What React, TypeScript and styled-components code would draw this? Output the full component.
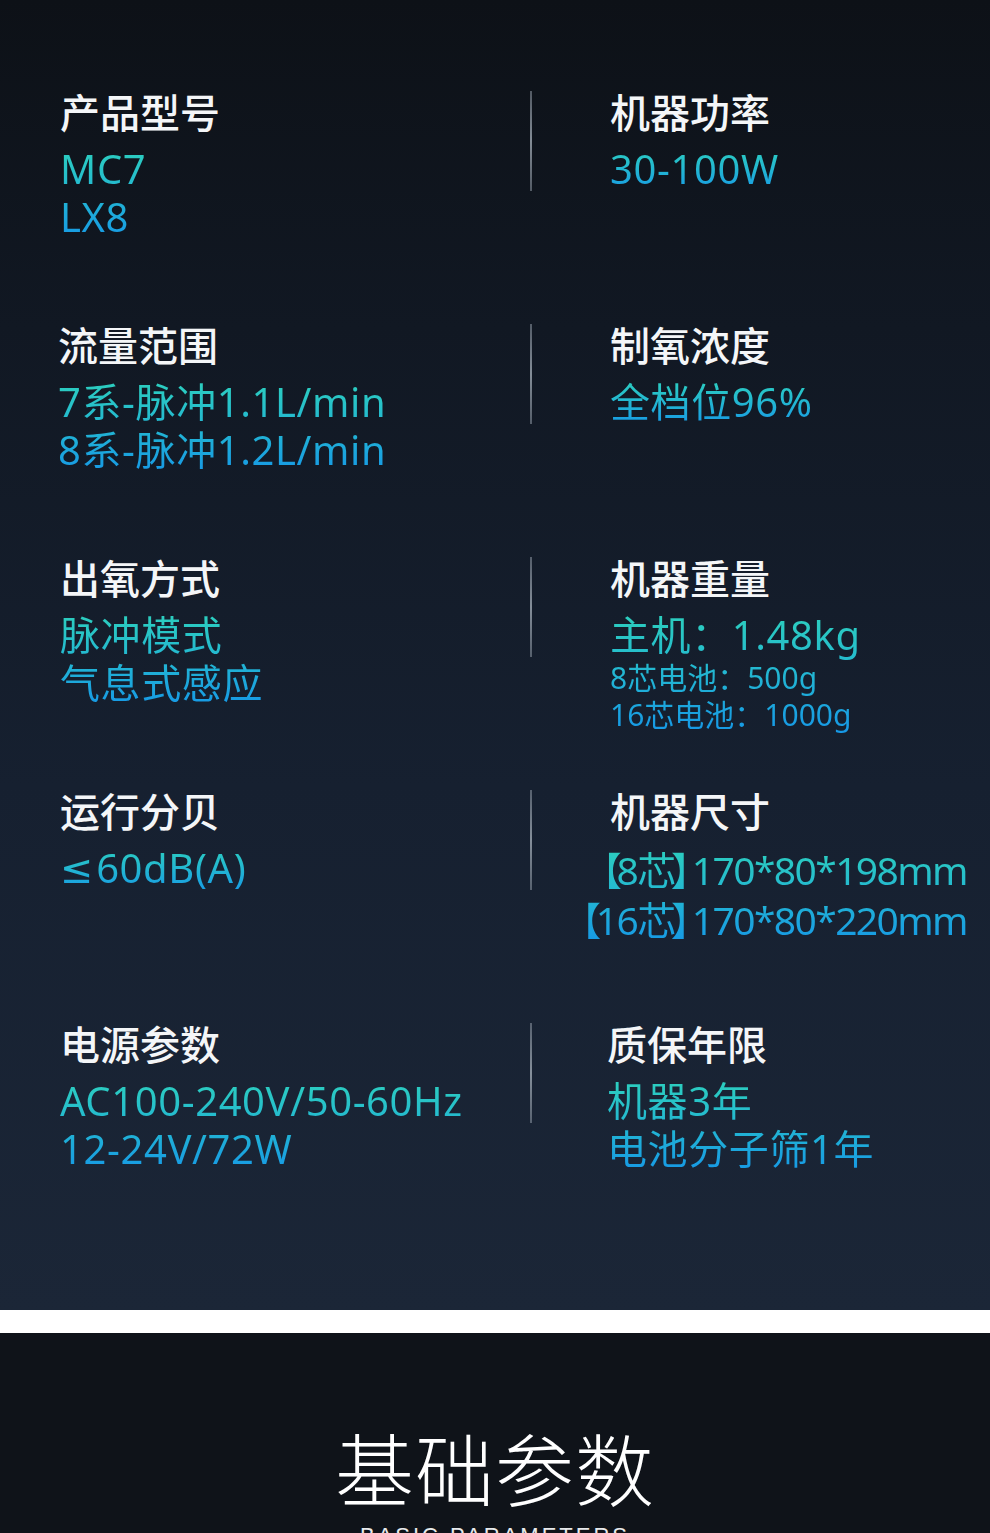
import type { ReactNode } from "react";
import styled, { createGlobalStyle } from "styled-components";

const GlobalStyle = createGlobalStyle`
  html, body {
    margin: 0;
    padding: 0;
    background: #0f1319;
    overflow: hidden;
  }
  body {
    font-family: "Noto Sans CJK SC", "Noto Sans", sans-serif;
  }
`;

type Spec = {
  label: string;
  values: ReactNode[];
  small?: string[];
  align?: "left" | "right";
  shift?: number;
};

const Size = ({ core, dims }: { core: string; dims: string }) => (
  <>
    <Bracket $side="open">【</Bracket>
    {core}
    <Bracket $side="close">】</Bracket>
    {dims}
  </>
);

const Decibel = () => (
  <>
    <Sym>≤</Sym>60dB(A)
  </>
);

const rows: [Spec, Spec][] = [
  [
    { label: "产品型号", values: ["MC7", "LX8"] },
    { label: "机器功率", values: ["30-100W"] },
  ],
  [
    { label: "流量范围", values: ["7系-脉冲1.1L/min", "8系-脉冲1.2L/min"], shift: -2 },
    { label: "制氧浓度", values: ["全档位96%"] },
  ],
  [
    { label: "出氧方式", values: ["脉冲模式", "气息式感应"] },
    { label: "机器重量", values: ["主机：1.48kg"], small: ["8芯电池：500g", "16芯电池：1000g"] },
  ],
  [
    { label: "运行分贝", values: [<Decibel key="db" />] },
    {
      label: "机器尺寸",
      values: [
        <Size key="8" core="8芯" dims="170*80*198mm" />,
        <Size key="16" core="16芯" dims="170*80*220mm" />,
      ],
      align: "right",
    },
  ],
  [
    { label: "电源参数", values: ["AC100-240V/50-60Hz", "12-24V/72W"] },
    { label: "质保年限", values: ["机器3年", "电池分子筛1年"], shift: -3 },
  ],
];

const Cell = ({ spec }: { spec: Spec }) => (
  <CellBox $shift={spec.shift ?? 0}>
    <Label>{spec.label}</Label>
    <Values $align={spec.align ?? "left"}>
      {spec.values.map((v, i) => (
        <Value key={i} $tight={spec.align === "right"}>
          {v}
        </Value>
      ))}
      {spec.small?.map((v) => (
        <SmallValue key={v}>{v}</SmallValue>
      ))}
    </Values>
  </CellBox>
);

const App = () => {
  return (
    <Page>
      <GlobalStyle />
      <SpecSection>
        {rows.map(([left, right]) => (
          <Row key={left.label}>
            <Cell spec={left} />
            <Divider />
            <RightSlot>
              <Cell spec={right} />
            </RightSlot>
          </Row>
        ))}
      </SpecSection>
      <WhiteBand />
      <TitleSection>
        <Title>基础参数</Title>
        <SubTitle>BASIC PARAMETERS</SubTitle>
      </TitleSection>
    </Page>
  );
};

const Page = styled.div`
  width: 990px;
  height: 1533px;
  overflow: hidden;
`;

const SpecSection = styled.section`
  height: 1310px;
  box-sizing: border-box;
  padding: 87px 0 0 60px;
  background: linear-gradient(180deg, #0d1117 0%, #111823 25%, #162030 60%, #1b2637 100%);
  display: flex;
  flex-direction: column;
`;

const Row = styled.div`
  display: grid;
  grid-template-columns: 470px 1px minmax(0, 1fr);
  align-items: start;
  height: 233px;
`;

const Divider = styled.div`
  width: 1.5px;
  height: 100px;
  margin-top: 4px;
  background: linear-gradient(180deg, rgba(150, 160, 172, 0.5), rgba(170, 180, 190, 0.75), rgba(150, 160, 172, 0.5));
`;

const RightSlot = styled.div`
  min-width: 0;
  padding-left: 79px;
  padding-right: 23px;
`;

const CellBox = styled.div<{ $shift: number }>`
  display: flex;
  flex-direction: column;
  margin-left: ${(p) => p.$shift}px;
`;

const Label = styled.div`
  color: #f4f6f8;
  font-size: 40px;
  font-weight: 500;
  line-height: 48px;
  margin-bottom: 10px;
`;

const Values = styled.div<{ $align: "left" | "right" }>`
  display: flex;
  flex-direction: column;
  align-items: ${(p) => (p.$align === "right" ? "flex-end" : "flex-start")};
  margin-left: ${(p) => (p.$align === "right" ? "-50px" : "0")};
  background: linear-gradient(180deg, #2dd0bd 0%, #23b7d2 50%, #1698e6 100%);
  -webkit-background-clip: text;
  background-clip: text;
  color: transparent;
  font-family: "Noto Sans", "Noto Sans CJK SC", sans-serif;
`;

const Value = styled.div<{ $tight: boolean }>`
  font-size: ${(p) => (p.$tight ? "39px" : "40px")};
  font-weight: 400;
  line-height: 48px;
  letter-spacing: ${(p) => (p.$tight ? "-1.6px" : "0.6px")};
  white-space: nowrap;
`;

const Sym = styled.span`
  font-family: "DejaVu Sans", sans-serif;
  margin-right: 2px;
`;

const Bracket = styled.span<{ $side: "open" | "close" }>`
  font-family: "Noto Sans CJK SC", sans-serif;
  margin-left: ${(p) => (p.$side === "close" ? "-0.1em" : "0")};
  margin-right: ${(p) => (p.$side === "close" ? "-0.42em" : "-0.1em")};
`;

const SmallValue = styled.div`
  font-size: 30px;
  font-weight: 400;
  line-height: 37px;
  white-space: nowrap;
  &:first-of-type {
    margin-top: 2px;
  }
`;

const WhiteBand = styled.div`
  height: 23px;
  background: #ffffff;
`;

const TitleSection = styled.section`
  height: 200px;
  background: #0f1319;
  display: flex;
  flex-direction: column;
  align-items: center;
  padding-top: 84px;
  box-sizing: border-box;
`;

const Title = styled.h1`
  margin: 0;
  color: #ffffff;
  font-size: 79px;
  font-weight: 300;
  line-height: 100px;
  letter-spacing: 1px;
`;

const SubTitle = styled.div`
  margin-top: 6px;
  color: #e8eaec;
  font-family: "Liberation Sans", Arial, sans-serif;
  font-size: 22px;
  letter-spacing: 3px;
  line-height: 26px;
`;

export default App;
